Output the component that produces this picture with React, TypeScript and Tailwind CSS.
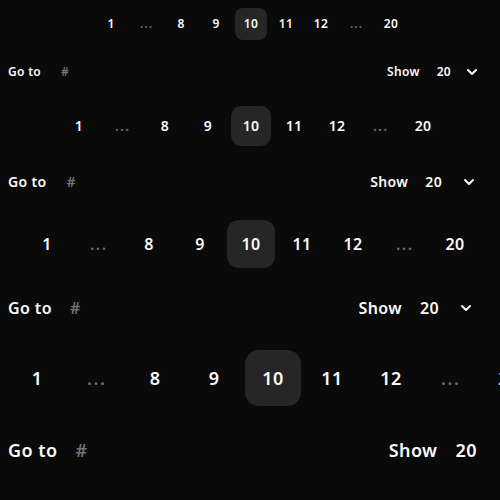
import React from "react";

type Size = {
  text: string;
  box: string;
  radius: string;
  pag: string;
  ctrlH: string;
  goGap: string;
  showGap: string;
  selGap: string;
  selPr: string;
};

const sizes: Size[] = [
  { text: "text-xs", box: "w-8 h-8", radius: "rounded-lg", pag: "pl-[2px]", ctrlH: "h-8", goGap: "gap-5", showGap: "gap-[17px]", selGap: "gap-[13px]", selPr: "pr-[12px]" },
  { text: "text-sm", box: "w-10 h-10", radius: "rounded-[10px]", pag: "pl-[2px]", ctrlH: "h-10", goGap: "gap-5", showGap: "gap-[17px]", selGap: "gap-[19px]", selPr: "pr-[15px]" },
  { text: "text-base", box: "w-12 h-12", radius: "rounded-xl", pag: "pl-[2px]", ctrlH: "h-12", goGap: "gap-[18px]", showGap: "gap-[18px]", selGap: "gap-[19px]", selPr: "pr-[18px]" },
  { text: "text-lg", box: "w-14 h-14", radius: "rounded-[14px]", pag: "pl-px", ctrlH: "h-14", goGap: "gap-[18px]", showGap: "gap-[18px]", selGap: "gap-[22px]", selPr: "pr-[22px]" },
];

const items: (string | null)[] = ["1", null, "8", "9", "10", "11", "12", null, "20"];

function Chevron() {
  return (
    <svg width="16" height="16" viewBox="0 0 24 24" fill="none" stroke="currentColor" strokeWidth="3" strokeLinecap="round" strokeLinejoin="round">
      <path d="m6 9 6 6 6-6" />
    </svg>
  );
}

function Section({ s }: { s: Size }) {
  return (
    <div className={`w-max min-w-full flex flex-col gap-4 px-2 pt-2 pb-[10px] tracking-wide ${s.text}`}>
      <div className={`mx-auto w-fit flex gap-[3px] ${s.pag}`}>
        {items.map((it, i) => (
          <div
            key={i}
            className={`${s.box} ${s.radius} flex items-center justify-center font-semibold ${
              it === "10" ? "bg-[#262626] text-[#fafafa]" : it === null ? "text-[#6b6b6b]" : "text-[#fafafa]"
            }`}
          >
            {it === null ? <span className="tracking-[0.09em] pl-[0.09em] font-semibold">...</span> : it}
          </div>
        ))}
      </div>
      <div className={`flex items-center justify-between ${s.ctrlH}`}>
        <div className={`flex items-center ${s.goGap}`}>
          <span className="font-semibold text-[#fafafa]">Go to</span>
          <span className="font-semibold text-[#737373]">#</span>
        </div>
        <div className={`flex items-center ${s.showGap}`}>
          <span className="font-semibold text-[#fafafa]">Show</span>
          <div className={`flex items-center ${s.selGap} ${s.selPr}`}>
            <span className="font-semibold text-[#fafafa]">20</span>
            <span className="text-[#fafafa]">
              <Chevron />
            </span>
          </div>
        </div>
      </div>
    </div>
  );
}

export default function App() {
  return (
    <div className="min-h-screen w-full overflow-hidden bg-[#0a0a0a]" style={{ fontFamily: '"Noto Sans", sans-serif' }}>
      {sizes.map((s, i) => (
        <Section key={i} s={s} />
      ))}
    </div>
  );
}
